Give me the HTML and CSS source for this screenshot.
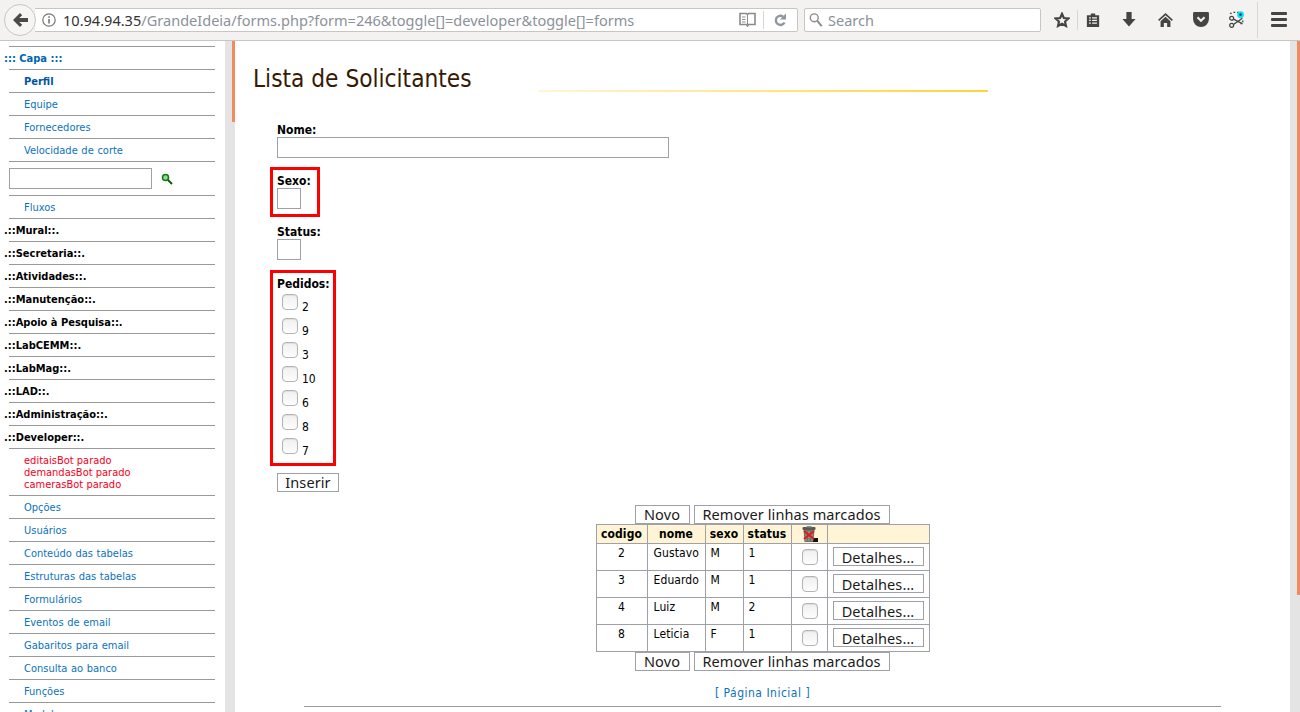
FILE: index.html
```html
<!DOCTYPE html>
<html lang="pt">
<head>
    <meta charset="UTF-8">
    <title>Lista de Solicitantes</title>
    <link rel="stylesheet" href="styles.css">
</head>
<body>
<header class="toolbar">
    <button class="back" aria-label="Voltar">
        <svg width="15" height="14" viewBox="0 0 15 14"><path d="M0 7 7 0l2.200 2.200L6.200 5H15v4H6.200l3 2.800L7 14z" fill="#4a4a4a"/></svg>
    </button>
    <div class="urlbar">
        <svg class="info" width="14" height="14" viewBox="0 0 14 14"><circle cx="7" cy="7" r="6.200" fill="none" stroke="#777" stroke-width="1.200"/><rect x="6.200" y="6" width="1.600" height="4.500" fill="#777"/><rect x="6.200" y="3.300" width="1.600" height="1.600" fill="#777"/></svg>
        <span class="url"><b>10.94.94.35</b>/GrandeIdeia/forms.php?form=246&amp;toggle[]=developer&amp;toggle[]=forms</span>
        <svg class="reader" width="17" height="15" viewBox="0 0 17 15"><path d="M1 1.500h6.500l1 1 1-1H16v11H9.500l-1 1.500-1-1.500H1z" fill="none" stroke="#8a8a8a" stroke-width="1.600"/><path d="M8.500 2.500v10M3 5h3.500M3 7.500h3.500M3 10h3.500" stroke="#8a8a8a" fill="none"/></svg>
        <span class="sep"></span>
        <svg class="reload" width="12" height="14" viewBox="0 0 12 14"><path d="M10.500 9.500A4.600 4.600 0 1 1 9 3.500" fill="none" stroke="#8f979f" stroke-width="2.400"/><path d="M6 6.500h6V.5z" fill="#8f979f"/></svg>
    </div>
    <div class="searchbar">
        <svg width="14" height="16" viewBox="0 0 16 18"><circle cx="6" cy="6.500" r="4.500" fill="none" stroke="#8a8a8a" stroke-width="1.600"/><path d="m9.500 10 5 6" stroke="#8a8a8a" stroke-width="2.200"/></svg>
        <span>Search</span>
    </div>
    <div class="tools">
        <svg class="star" width="16" height="16" viewBox="0 0 18 18"><path d="M9 2l2.100 4.700 5.100.6-3.800 3.400 1.100 5L9 13.200 4.500 15.700l1.100-5L1.800 7.300l5.100-.6z" fill="none" stroke="#444" stroke-width="2.400"/></svg>
        <span class="tool-sep"></span>
        <svg class="clip" width="14" height="16" viewBox="0 0 16 18"><path d="M1 3.500h4.500V1.500h5v2H15V17H1z" fill="#444"/><path d="M3.500 6.500h2M7 6.500h5.500M3.500 9.500h2M7 9.500h5.500M3.500 12.500h2M7 12.500h5.500" stroke="#f3f2f0" stroke-width="1.300"/></svg>
        <svg class="down" width="14" height="15" viewBox="0 0 16 17"><path d="M5 0h6v8h4.500L8 16.500.5 8H5z" fill="#444"/></svg>
        <svg class="home" width="15" height="14" viewBox="0 0 18 17"><path d="M9 0 18 8.200l-1.300 1.400L9 2.700 1.300 9.600 0 8.200z" fill="#444"/><path d="M9 4.500 15 10v7h-4v-5H7v5H3v-7z" fill="#444"/></svg>
        <svg class="pocket" width="16" height="15" viewBox="0 0 18 17"><path d="M1.500 0h15A1.500 1.500 0 0 1 18 1.500V8A9 9 0 0 1 0 8V1.500A1.500 1.500 0 0 1 1.500 0z" fill="#444"/><path d="M5 6l4 4 4-4" fill="none" stroke="#f3f2f0" stroke-width="2.400"/></svg>
        <svg class="snip" width="16" height="18" viewBox="0 0 18 20"><path d="M1 2.500h2M5 1.500h2M9 1.500h2M15.500 10.500v2M13 14h2" stroke="#444" stroke-width="1.500" fill="none"/><circle cx="13" cy="4" r="3.800" fill="#10e0f0"/><circle cx="13" cy="4" r="1.500" fill="#0a4a80"/><circle cx="3" cy="8" r="2.200" fill="none" stroke="#444" stroke-width="1.400"/><circle cx="3" cy="16" r="2.200" fill="none" stroke="#444" stroke-width="1.400"/><path d="m5 9 10 5M5 15l10-7" stroke="#444" stroke-width="1.500"/></svg>
        <span class="tool-sep tall"></span>
        <div class="burger"><i></i><i></i><i></i></div>
    </div>
</header>

<div class="page">
    <nav class="sidebar">
        <div class="row head blue">::: Capa :::</div>
        <div class="row link strong">Perfil</div>
        <div class="row link">Equipe</div>
        <div class="row link">Fornecedores</div>
        <div class="row link">Velocidade de corte</div>
        <div class="row find">
            <input class="find-box" type="text">
            <svg width="12" height="12" viewBox="0 0 12 12"><circle cx="4.500" cy="4.500" r="3" fill="#9fd89f" stroke="#0a7a0a" stroke-width="1.500"/><path d="m7 7 4 4" stroke="#0a5a0a" stroke-width="2"/></svg>
        </div>
        <div class="row link">Fluxos</div>
        <div class="row head">.::Mural::.</div>
        <div class="row head">.::Secretaria::.</div>
        <div class="row head">.::Atividades::.</div>
        <div class="row head">.::Manutenção::.</div>
        <div class="row head">.::Apoio à Pesquisa::.</div>
        <div class="row head">.::LabCEMM::.</div>
        <div class="row head">.::LabMag::.</div>
        <div class="row head">.::LAD::.</div>
        <div class="row head">.::Administração::.</div>
        <div class="row head">.::Developer::.</div>
        <div class="row bots">editaisBot parado<br>demandasBot parado<br>camerasBot parado</div>
        <div class="row link">Opções</div>
        <div class="row link">Usuários</div>
        <div class="row link">Conteúdo das tabelas</div>
        <div class="row link">Estruturas das tabelas</div>
        <div class="row link">Formulários</div>
        <div class="row link">Eventos de email</div>
        <div class="row link">Gabaritos para email</div>
        <div class="row link">Consulta ao banco</div>
        <div class="row link">Funções</div>
        <div class="row link">Modelos</div>
    </nav>

    <div class="strip"><span class="accent"></span></div>

    <main class="content">
        <div class="title">
            <h1>Lista de Solicitantes</h1>
            <span class="title-line"></span>
        </div>

        <form class="form">
            <div class="field">
                <label>Nome:</label>
                <input class="text-nome" type="text">
            </div>
            <div class="field marked sexo">
                <label>Sexo:</label>
                <span class="select"></span>
            </div>
            <div class="field">
                <label>Status:</label>
                <span class="select"></span>
            </div>
            <div class="field marked pedidos">
                <label>Pedidos:</label>
                <div class="check"><span class="box"></span>2</div>
                <div class="check"><span class="box"></span>9</div>
                <div class="check"><span class="box"></span>3</div>
                <div class="check"><span class="box"></span>10</div>
                <div class="check"><span class="box"></span>6</div>
                <div class="check"><span class="box"></span>8</div>
                <div class="check"><span class="box"></span>7</div>
            </div>
            <button class="btn inserir" type="button">Inserir</button>
        </form>

        <div class="listing">
            <div class="actions">
                <button class="btn novo" type="button">Novo</button>
                <button class="btn remover" type="button">Remover linhas marcados</button>
            </div>
            <table class="grid">
                <tbody>
                <tr class="top">
                    <th class="c1">codigo</th>
                    <th class="c2">nome</th>
                    <th class="c3">sexo</th>
                    <th class="c4">status</th>
                    <th class="c5">
                        <svg class="trash" width="17" height="17" viewBox="0 0 17 17"><path d="M2.500 3h11l-1 13h-9z" fill="#6d7468"/><path d="M5 5v10M8 5v10M11 5v10" stroke="#9aa096"/><rect x="1.500" y="1" width="13" height="3" rx="1" fill="#555a52"/><rect x="5.500" y="0" width="5" height="1.500" fill="#8a8f86"/><path d="M12.500 12H17v4h-5z" fill="#111"/><path d="m3 5 10 8M13 5 3 13" stroke="#e8161a" stroke-width="2"/></svg>
                    </th>
                    <th class="c6"></th>
                </tr>
                <tr>
                    <td class="mid">2</td><td>Gustavo</td><td>M</td><td>1</td>
                    <td class="mid"><span class="box"></span></td>
                    <td class="mid"><button class="btn detalhes" type="button">Detalhes...</button></td>
                </tr>
                <tr>
                    <td class="mid">3</td><td>Eduardo</td><td>M</td><td>1</td>
                    <td class="mid"><span class="box"></span></td>
                    <td class="mid"><button class="btn detalhes" type="button">Detalhes...</button></td>
                </tr>
                <tr>
                    <td class="mid">4</td><td>Luiz</td><td>M</td><td>2</td>
                    <td class="mid"><span class="box"></span></td>
                    <td class="mid"><button class="btn detalhes" type="button">Detalhes...</button></td>
                </tr>
                <tr>
                    <td class="mid">8</td><td>Leticia</td><td>F</td><td>1</td>
                    <td class="mid"><span class="box"></span></td>
                    <td class="mid"><button class="btn detalhes" type="button">Detalhes...</button></td>
                </tr>
                </tbody>
            </table>
            <div class="actions">
                <button class="btn novo" type="button">Novo</button>
                <button class="btn remover" type="button">Remover linhas marcados</button>
            </div>
            <p class="home-link">[ <a>Página Inicial</a> ]</p>
            <hr class="rule">
        </div>
    </main>

    <div class="strip right"><span class="accent"></span></div>
</div>
</body>
</html>
```

FILE: styles.css
```css
* {
    margin: 0;
    padding: 0;
    box-sizing: border-box;
}

html, body {
    height: 100%;
    overflow: hidden;
}

body {
    font-family: "DejaVu Sans Condensed", "DejaVu Sans", sans-serif;
    font-size: 12px;
    color: #000;
    background: #fff;
}

/* browser toolbar */
.toolbar {
    display: flex;
    align-items: center;
    height: 41px;
    padding: 0 0 1px 4px;
    background: #f3f2f0;
    border-bottom: 1px solid #c9c6c2;
    font-family: "Noto Sans", sans-serif;
}

.back {
    display: flex;
    align-items: center;
    justify-content: center;
    width: 32px;
    height: 32px;
    margin-right: -1px;
    border: 1px solid #c9c6c2;
    border-radius: 50%;
    background: #f6f5f3;
    position: relative;
    z-index: 1;
}

.urlbar {
    display: flex;
    align-items: center;
    width: 763px;
    height: 24px;
    padding-left: 7px;
    background: #fff;
    border: 1px solid #c9c6c2;
    border-left: 0;
    border-radius: 0 2px 2px 0;
}

.url {
    margin-left: 7px;
    flex: 1;
    font-size: 14.55px;
    line-height: 20px;
    color: #8c9198;
    white-space: nowrap;
}

.url b {
    font-weight: 400;
    color: #333;
}

.reader {
    margin-right: 7px;
}

.sep {
    width: 1px;
    height: 18px;
    background: #d8d6d3;
    margin-right: 10px;
}

.reload {
    margin-right: 11px;
}

.searchbar {
    display: flex;
    align-items: center;
    gap: 5px;
    width: 237px;
    height: 24px;
    margin-left: 6px;
    padding-left: 4px;
    background: #fff;
    border: 1px solid #c9c6c2;
    border-radius: 2px;
    font-size: 14.5px;
    color: #8c9198;
}

.tools {
    display: flex;
    align-items: center;
    margin-left: 13px;
}

.tool-sep {
    width: 1px;
    height: 20px;
    margin: 0 8px 0 7px;
    background: #d8d6d3;
}

.tool-sep.tall {
    height: 36px;
    margin: 0 13px 0 12px;
}

.down {
    margin-left: 22px;
}

.home {
    margin-left: 22px;
}

.pocket {
    margin-left: 20px;
}

.snip {
    margin-left: 20px;
}

.burger {
    display: flex;
    flex-direction: column;
    gap: 3px;
}

.burger i {
    display: block;
    width: 16px;
    height: 3px;
    border-radius: 1px;
    background: #444;
}

/* page */
.page {
    display: flex;
    height: 671px;
    overflow: hidden;
}

.sidebar {
    width: 225px;
    flex-shrink: 0;
    padding: 5px 0 0 9px;
    font-size: 11px;
    overflow: hidden;
}

.row {
    width: 206px;
    height: 23px;
    line-height: 23px;
    border-top: 1px solid #999;
    white-space: nowrap;
}

.head {
    margin-left: 0;
    text-indent: -5px;
    font-weight: 700;
}

.head.blue {
    color: #0066b3;
}

.link {
    padding-left: 15px;
    color: #0b72bd;
    word-spacing: .5px;
}

.link.strong {
    font-weight: 700;
    color: #00569e;
}

.find {
    display: flex;
    align-items: center;
    height: 34px;
    gap: 9px;
}

.find-box {
    width: 143px;
    height: 21px;
    border: 1px solid #a0a0a0;
    background: #fff;
}

.bots {
    height: 47px;
    padding: 6px 0 0 15px;
    line-height: 12px;
    color: #f5001a;
}

.strip {
    width: 10px;
    flex-shrink: 0;
    background: #e4e4e4;
    display: flex;
    justify-content: flex-end;
}

.accent {
    display: block;
    width: 3px;
    height: 81px;
    background: #f28a60;
}

.strip.right .accent {
    height: 554px;
}

.content {
    width: 1055px;
    flex-shrink: 0;
    overflow: hidden;
}

.title {
    display: flex;
    align-items: flex-end;
    height: 51px;
    padding-left: 18px;
}

h1 {
    width: 285px;
    font-size: 24.2px;
    font-weight: 400;
    line-height: 28px;
    color: #351a04;
    margin-bottom: -1px;
}

.title-line {
    display: block;
    width: 450px;
    height: 2px;
    background: linear-gradient(to right, #fff6d8, #fdd43a);
}

.form {
    display: flex;
    flex-direction: column;
    align-items: flex-start;
    padding: 30px 0 0 35px;
    margin-left: 7px;
}

.field {
    display: flex;
    flex-direction: column;
    align-items: flex-start;
    margin-bottom: 6px;
}

.field label {
    font-weight: 700;
    line-height: 14px;
    padding-top: 1px;
    box-sizing: content-box;
}

.text-nome {
    width: 392px;
    height: 21px;
    border: 1px solid #a0a0a8;
    background: #fff;
}

.select {
    display: block;
    width: 24px;
    height: 21px;
    border: 1px solid #a0a0a8;
}

.marked {
    border: 3px solid #f00;
    margin: 3px 0 7px -7px;
    padding: 3px 8px 0 4px;
    min-height: 50px;
}

.sexo {
    width: 50px;
}

.pedidos {
    width: 66px;
    height: 196px;
    margin-top: 4px;
}

.check {
    display: flex;
    align-items: flex-end;
    height: 24px;
    padding: 0 0 1px 5px;
    gap: 4px;
    line-height: 13px;
}

.box {
    display: inline-block;
    width: 16px;
    height: 16px;
    border: 1px solid #b4b4b4;
    border-radius: 4px;
    background: linear-gradient(#f0f0f0, #fdfdfd);
    box-shadow: inset 0 1px 1px #ddd;
    margin-bottom: 4px;
}

.btn {
    font-family: "Noto Sans", sans-serif;
    font-size: 14.5px;
    letter-spacing: .1px;
    line-height: 16px;
    color: #1a1a1a;
    background: #fff;
    border: 1px solid #a0a0a8;
    padding-bottom: 2px;
}

.inserir {
    width: 62px;
    height: 19px;
}

.listing {
    display: flex;
    flex-direction: column;
    align-items: center;
    margin-top: 13px;
}

.actions {
    display: flex;
    gap: 4px;
    margin-left: -1px;
}

.novo {
    width: 55px;
    height: 19px;
}

.remover {
    width: 196px;
    height: 19px;
}

.grid {
    border-collapse: collapse;
    table-layout: fixed;
    width: 334px;
    letter-spacing: .1px;
}

.grid th, .grid td {
    border: 1px solid #a0a0a8;
    vertical-align: top;
}

.grid th {
    height: 19px;
    padding-top: 1px;
    background: #fff4d5;
    font-weight: 700;
    line-height: 17px;
    text-align: center;
}

.grid th.c5 {
    padding-top: 0;
}

.grid td {
    height: 27px;
    padding: 1px 5px;
    line-height: 16px;
}

.grid td:nth-child(2) {
    padding-left: 6px;
}

.c1 { width: 51px; }
.c2 { width: 58px; }
.c3 { width: 38px; }
.c4 { width: 48px; }
.c5 { width: 36px; }

.grid td.mid {
    text-align: center;
}

.grid td .box {
    position: relative;
    left: 1px;
    margin: 4px 0 0;
    vertical-align: top;
}

.trash {
    display: block;
    margin: 1px 0 0 9px;
}

.detalhes {
    display: block;
    width: 91px;
    height: 19px;
    margin: 2px 0 0;
    padding-bottom: 0;
}

.home-link {
    margin-top: 14px;
    color: #0b72bd;
    line-height: 16px;
    letter-spacing: .5px;
}

.rule {
    width: 917px;
    height: 1px;
    margin-top: 5px;
    border: 0;
    background: #999;
}
```
